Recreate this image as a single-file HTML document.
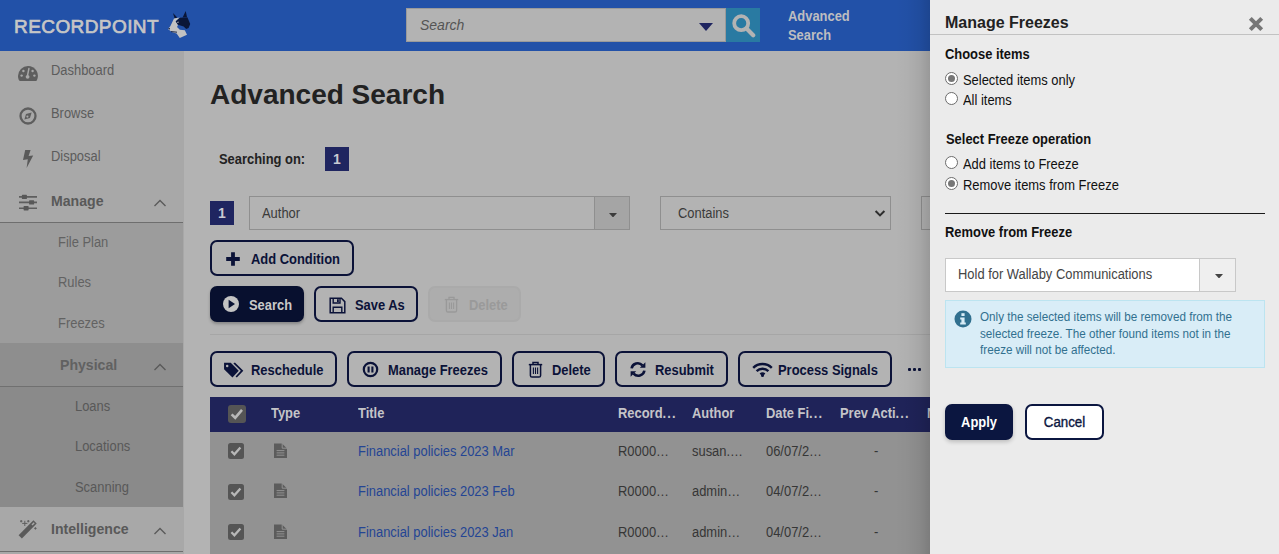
<!DOCTYPE html>
<html lang="en">
<head>
<meta charset="utf-8">
<title>Advanced Search - Manage Freezes</title>
<style>
*{box-sizing:border-box;margin:0;padding:0}
html,body{width:1279px;height:554px;overflow:hidden;background:#b3b3b3;font-family:"Liberation Sans",sans-serif;font-size:14px;color:#222}
.abs{position:absolute}
#stage{position:relative;width:1279px;height:554px;overflow:hidden;background:#b3b3b3}
/* header */
#hdr{position:absolute;left:0;top:0;width:1279px;height:51px;background:#2251a8}
#logo{position:absolute;left:14px;top:14.5px;font-size:19px;line-height:24px;font-weight:normal;letter-spacing:0.42px;color:#c6c6c6;-webkit-text-stroke:.7px #c6c6c6;white-space:nowrap}
#sbox{position:absolute;left:406px;top:8px;width:320px;height:34px;background:#b3b3b3;border:1px solid #9a9a9a}
#sbox span{position:absolute;left:13px;top:8px;font-style:italic;font-size:14px;line-height:16px;color:#555}
#sbtn{position:absolute;left:726px;top:8px;width:34px;height:34px;background:#297aa2}
#advl{position:absolute;left:788px;top:7px;font-weight:bold;font-size:14px;line-height:19px;color:#bdbdc0}
/* sidebar */
#side{position:absolute;left:0;top:51px;width:184px;height:503px;background:#a8a8a8}
.nav{position:absolute;left:51px;font-size:14px;line-height:18px;color:#5c5c5c;white-space:nowrap}
.navb{font-weight:bold;font-size:15px;color:#595959}
.sub{position:absolute;left:0;width:183px}
/* content */
h1{position:absolute;left:210px;top:77px;font-size:28px;line-height:36px;font-weight:bold;color:#222;white-space:nowrap}
.nbox{position:absolute;width:24px;height:24px;background:#1f2560;color:#c9c9d2;font-weight:bold;font-size:14px;line-height:24px;text-align:center}
.inp{position:absolute;height:34px;border:1px solid #8f8f8f;background:#b3b3b3;font-size:14px;line-height:32px;color:#3a3a3a;white-space:nowrap}
.btn{position:absolute;height:36px;border:2px solid #0b1238;border-radius:7px;color:#0b1238;font-weight:bold;font-size:14px;line-height:32px;white-space:nowrap;background:#b3b3b3}
.btn span{position:absolute;top:1px}
.btn svg{position:absolute}
.btn.pri{background:#08102f;color:#c9c9c9;border-color:#08102f;box-shadow:0 2px 3px rgba(0,0,0,.25)}
.btn.dis{border-color:#aaa;background:#adadad;color:#9a9a9a}
/* table */
#thead{position:absolute;left:210px;top:397px;width:730px;height:35px;background:#1f2359}
.th{position:absolute;top:405px;font-weight:bold;font-size:14px;line-height:16px;color:#c4c4c8;white-space:nowrap}
#tbody{position:absolute;left:210px;top:432px;width:730px;height:122px;background:#929292}
.td{position:absolute;font-size:14px;line-height:16px;color:#363636;white-space:nowrap}
.lnk{color:#244594}
.cb{position:absolute;width:16px;height:16px;border-radius:2.5px;background:#555}
.nav,.td,.th,.btn span,#panel .t,.inp .tx,#advl{transform:scaleX(.923);transform-origin:0 50%}
.navb{transform:scaleX(.94)}
#panel .t.ar{transform:none}
/* panel */
#shadow{position:absolute;left:895px;top:0;width:35px;height:554px;background:linear-gradient(to right,rgba(0,0,0,0),rgba(0,0,0,.02) 35%,rgba(0,0,0,.065) 70%,rgba(0,0,0,.15) 100%)}
#panel{position:absolute;left:930px;top:0;width:349px;height:554px;background:#ebebeb;color:#101010}
#panel .t{position:absolute;white-space:nowrap;font-size:14px;line-height:16px}
#panel .b{font-weight:bold;color:#111}
.radio{position:absolute;left:15px;width:13px;height:13px;border-radius:50%;border:1.2px solid #6c6c6c;background:#fff}
.radio.on::after{content:"";position:absolute;left:1.8px;top:1.8px;width:7px;height:7px;border-radius:50%;background:#767676}
</style>
</head>
<body>
<div id="stage">

<!-- HEADER -->
<div id="hdr">
  <div id="logo">RECORDPOINT</div>
  <div id="sbox"><span>Search</span></div>
  <div id="sbtn"><svg class="abs" style="left:5px;top:5px" width="25" height="25" viewBox="0 0 25 25"><circle cx="10.2" cy="10.2" r="7" fill="none" stroke="#b3b3b3" stroke-width="3.8"/><path d="M15.8 15.8 L22.2 22.2" stroke="#b3b3b3" stroke-width="4.2" stroke-linecap="round"/></svg></div>
  <svg class="abs" style="left:699px;top:23px" width="14" height="8" viewBox="0 0 14 8"><path d="M0 0H14L7 8z" fill="#1f2560"/></svg>
  <svg class="abs" id="dog" style="left:166px;top:9px" width="26" height="30" viewBox="166 9 26 30">
    <path d="M173 13 L177.2 17.4 L174.6 18.6z" fill="#0a1638"/>
    <path d="M185.7 10.9 L187 17 L182.6 17.4z" fill="#0a1638"/>
    <path d="M174 18.5 L179.8 17.6 L175.7 21.2 L178 25 L177 27 L179.8 29.8 L184.8 30.2 L187 34.8 L179.8 37.9 L176.6 33.4 L171.7 32 L168 28.9 L170.3 26.2z" fill="#c2c2c2"/>
    <path d="M175.7 21.4 L179.8 17.8 L184 17.6 L187.4 17.2 L190.2 23.9 L188.6 28 L186.2 29 L183.6 26.6 L178 24.8z" fill="#0a1638"/>
    <path d="M168 28.2 L170 28 L169.6 29.8z" fill="#0a1638"/>
    <path d="M171 31.6 L177 32.2" stroke="#0a1638" stroke-width=".9"/>
    <path d="M176.6 22.2 L178.6 21.6 L178.4 23z" fill="#c2c2c2"/>
  </svg>
  <div id="advl">Advanced<br>Search</div>
</div>

<!-- SIDEBAR -->
<div id="side"></div>
<div class="sub" style="top:222px;height:1px;background:#6e6e6e"></div>
<div class="sub" style="top:223px;height:120px;background:#9c9c9c"></div>
<div class="sub" style="top:343px;height:43px;background:#8e8e8e"></div>
<div class="sub" style="top:386px;height:1px;background:#707070"></div>
<div class="sub" style="top:387px;height:120px;background:#8a8a8a"></div>
<div class="sub" style="top:551px;height:1px;background:#6e6e6e"></div>

<div class="nav" style="top:61px">Dashboard</div>
<div class="nav" style="top:104px">Browse</div>
<div class="nav" style="top:147px">Disposal</div>
<div class="nav navb" style="top:192px">Manage</div>
<div class="nav" style="top:233px;left:58px;color:#626262">File Plan</div>
<div class="nav" style="top:273px;left:58px;color:#626262">Rules</div>
<div class="nav" style="top:314px;left:58px;color:#626262">Freezes</div>
<div class="nav navb" style="top:356px;left:60px;color:#616161">Physical</div>
<div class="nav" style="top:397px;left:75px;color:#585858">Loans</div>
<div class="nav" style="top:437px;left:75px;color:#585858">Locations</div>
<div class="nav" style="top:478px;left:75px;color:#585858">Scanning</div>
<div class="nav navb" style="top:520px">Intelligence</div>

<!-- chevrons -->
<svg class="abs" style="left:153px;top:198px" width="14" height="10" viewBox="0 0 14 10"><path d="M1.5 8 L7 2.5 L12.5 8" fill="none" stroke="#5a5a5a" stroke-width="1.4"/></svg>
<svg class="abs" style="left:153px;top:362px" width="14" height="10" viewBox="0 0 14 10"><path d="M1.5 8 L7 2.5 L12.5 8" fill="none" stroke="#5a5a5a" stroke-width="1.4"/></svg>
<svg class="abs" style="left:153px;top:526px" width="14" height="10" viewBox="0 0 14 10"><path d="M1.5 8 L7 2.5 L12.5 8" fill="none" stroke="#5a5a5a" stroke-width="1.4"/></svg>

<!-- nav icons -->
<svg class="abs" id="ic-dash" style="left:17px;top:65px" width="22" height="17" viewBox="0 0 22 17"><path d="M11 1 A10 10 0 0 0 1 11 c0 1.8 .5 3.4 1.2 4.6 .2 .3 .5 .4 .8 .4 h16 c.3 0 .6 -.1 .8 -.4 A10 10 0 0 0 11 1z" fill="#5e5e5e"/><circle cx="4.6" cy="10.6" r="1.2" fill="#a8a8a8"/><circle cx="6.4" cy="6" r="1.2" fill="#a8a8a8"/><circle cx="15.6" cy="6" r="1.2" fill="#a8a8a8"/><circle cx="17.4" cy="10.6" r="1.2" fill="#a8a8a8"/><path d="M11.9 3.6 L10.6 10.2" stroke="#a8a8a8" stroke-width="1.5" stroke-linecap="round"/><circle cx="10.6" cy="11.8" r="1.9" fill="#a8a8a8"/></svg>
<svg class="abs" id="ic-browse" style="left:18px;top:106px" width="20" height="20" viewBox="0 0 20 20"><circle cx="10" cy="10" r="7.5" fill="none" stroke="#5e5e5e" stroke-width="2.3"/><path d="M13.6 6.4 L12 12 L6.4 13.6 L8 8z" fill="#5e5e5e"/><circle cx="9.4" cy="10.6" r="1.1" fill="#a8a8a8"/></svg>
<svg class="abs" id="ic-bolt" style="left:21px;top:149px" width="14" height="20" viewBox="0 0 14 20"><path d="M4.2 1 L9.6 1 L7.6 7 L12.2 6.4 L5.6 19 L6.8 10.2 L2 11z" fill="#5a5a5a"/></svg>
<svg class="abs" id="ic-sliders" style="left:18px;top:194px" width="20" height="18" viewBox="0 0 20 18"><g stroke="#5e5e5e" stroke-width="1.6" fill="none"><path d="M1 2.9 H19 M1 8.4 H19 M1 14.2 H19"/></g><rect x="3.9" y="0.8" width="5" height="4.3" rx=".6" fill="#585858"/><rect x="11.1" y="6.3" width="5" height="4.3" rx=".6" fill="#585858"/><rect x="5.6" y="12.1" width="5" height="4.3" rx=".6" fill="#585858"/></svg>
<svg class="abs" id="ic-wand" style="left:18px;top:518px" width="21" height="21" viewBox="0 0 21 21"><path d="M0.6 17.2 L15.4 2.2 L18.7 5.5 L3.9 20.5z" fill="#5a5a5a"/><path d="M14 7 L16.2 4.8" stroke="#a8a8a8" stroke-width="1.5"/><g stroke="#5e5e5e" stroke-width="1" fill="none"><path d="M6.8 2.8 v5.2 M4.2 5.4 h5.2"/><path d="M3.2 2 v2.4 M2 3.2 h2.4"/><path d="M10.3 2 v2.4 M9.1 3.2 h2.4"/><path d="M17.4 9.2 v2.4 M16.2 10.4 h2.4"/></g></svg>

<!-- CONTENT -->
<h1>Advanced Search</h1>
<div class="td" style="left:219px;top:151px;font-weight:bold;color:#222">Searching on:</div>
<div class="nbox" style="left:325px;top:147px">1</div>
<div class="nbox" style="left:210px;top:201px">1</div>

<div class="inp" style="left:249px;top:196px;width:381px;padding-left:12px"><div class="tx">Author</div>
  <div class="abs" style="right:0;top:0;width:35px;height:32px;background:#a5a5a5;border-left:1px solid #8f8f8f"></div>
  <svg class="abs" style="right:12.5px;top:15.5px" width="8" height="4.5" viewBox="0 0 8 4.5"><path d="M0 0H8L4 4.5z" fill="#3c3c3c"/></svg>
</div>
<div class="inp" style="left:660px;top:196px;width:231px;padding-left:17px"><div class="tx">Contains</div>
  <svg class="abs" style="right:4px;top:12px" width="12" height="9" viewBox="0 0 12 9"><path d="M1.6 2 L6 6.4 L10.4 2" fill="none" stroke="#2e2e2e" stroke-width="2"/></svg>
</div>
<div class="inp" style="left:921px;top:196px;width:200px"></div>

<div class="btn" style="left:210px;top:240px;width:144px">
  <svg style="left:14px;top:10px" width="14" height="14" viewBox="0 0 14 14"><path d="M5.1 0.2h3.8v4.9h4.9v3.8h-4.9v4.9H5.1v-4.9H0.2V5.1h4.9z" fill="#0b1238"/></svg>
  <span style="left:39px">Add Condition</span></div>

<div class="btn pri" style="left:210px;top:286px;width:94px">
  <svg style="left:10.2px;top:6.5px" width="18" height="18" viewBox="0 0 18 18"><circle cx="9" cy="9" r="8" fill="#c4c4c4"/><path d="M6.6 4.8 L13 9 L6.6 13.2z" fill="#0a1334"/></svg>
  <span style="left:37px">Search</span></div>

<div class="btn" style="left:314px;top:286px;width:104px">
  <svg style="left:12.5px;top:9px" width="17" height="17" viewBox="0 0 17 17"><path d="M1.2 1.2 H12.4 L15.8 4.6 V15.8 H1.2z" fill="none" stroke="#0b1238" stroke-width="1.5"/><path d="M4.2 1.2 V6 H11 V1.2" fill="none" stroke="#0b1238" stroke-width="1.4"/><rect x="8" y="2.2" width="1.8" height="2.8" fill="#0b1238"/><path d="M4.2 15.8 V10.2 H12.8 V15.8" fill="none" stroke="#0b1238" stroke-width="1.4"/></svg>
  <span style="left:39px">Save As</span></div>

<div class="btn dis" style="left:428px;top:286px;width:93px">
  <svg style="left:14px;top:8px" width="15" height="17" viewBox="0 0 15 17"><g fill="none" stroke="#999" stroke-width="1.3"><path d="M0.8 3.6 H14.2"/><path d="M5 3.4 V1.4 H10 V3.4"/><path d="M2.4 3.8 V14.4 Q2.4 16 4 16 H11 Q12.6 16 12.6 14.4 V3.8"/><path d="M5.4 6.4 V13 M7.5 6.4 V13 M9.6 6.4 V13" stroke-width="1.1"/></g></svg>
  <span style="left:39px">Delete</span></div>

<div class="abs" style="left:210px;top:334px;width:730px;height:1px;background:#a6a6a6"></div>

<div class="btn" style="left:210px;top:351px;width:127px">
  <svg style="left:11px;top:7.5px" width="22" height="18" viewBox="0 0 21 17"><path d="M1 1.6 H7.4 L15 9.2 L9 15.6 L1 7.8z" fill="#0b1238"/><circle cx="4" cy="4.6" r="1.2" fill="#b3b3b3"/><path d="M10.6 1.6 H11.6 L19.4 9.2 L13.2 15.6 L12 14.6 L17 9.2 L10 2.2z" fill="#0b1238"/></svg>
  <span style="left:39px">Reschedule</span></div>

<div class="btn" style="left:347px;top:351px;width:155px">
  <svg style="left:13px;top:8px" width="17" height="17" viewBox="0 0 17 17"><circle cx="8.5" cy="8.5" r="6.7" fill="none" stroke="#0b1238" stroke-width="2.2"/><path d="M6.6 5.4 V11.6 M10.4 5.4 V11.6" stroke="#0b1238" stroke-width="2.1"/></svg>
  <span style="left:39px">Manage Freezes</span></div>

<div class="btn" style="left:512px;top:351px;width:93px">
  <svg style="left:14px;top:8px" width="15" height="17" viewBox="0 0 15 17"><g fill="none" stroke="#0b1238" stroke-width="1.5"><path d="M0.8 3.6 H14.2"/><path d="M5 3.4 V1.4 H10 V3.4"/><path d="M2.4 3.8 V14.4 Q2.4 16 4 16 H11 Q12.6 16 12.6 14.4 V3.8"/><path d="M5.4 6.4 V13 M7.5 6.4 V13 M9.6 6.4 V13" stroke-width="1.1"/></g></svg>
  <span style="left:38px">Delete</span></div>

<div class="btn" style="left:615px;top:351px;width:113px">
  <svg style="left:12px;top:8px" width="18" height="17" viewBox="0 0 18 17"><g fill="none" stroke="#0b1238" stroke-width="2.6"><path d="M2.6 7.4 A6.2 6.2 0 0 1 13.4 4.4"/><path d="M15.4 9.6 A6.2 6.2 0 0 1 4.6 12.6"/></g><path d="M16.4 1.2 V6.8 H10.8z" fill="#0b1238"/><path d="M1.6 15.8 V10.2 H7.2z" fill="#0b1238"/></svg>
  <span style="left:38px">Resubmit</span></div>

<div class="btn" style="left:738px;top:351px;width:154px">
  <svg style="left:12px;top:9px" width="21" height="16" viewBox="0 0 21 16"><g fill="none" stroke="#0b1238" stroke-width="2.4" stroke-linecap="butt"><path d="M1.2 5.8 A13.2 13.2 0 0 1 19.8 5.8"/><path d="M4.6 9.2 A8.4 8.4 0 0 1 16.4 9.2"/></g><path d="M7.6 11.6 A4.2 4.2 0 0 1 13.4 11.6 L10.5 14.6z" fill="#0b1238"/><circle cx="10.5" cy="13.6" r="1.5" fill="#0b1238"/></svg>
  <span style="left:38px">Process Signals</span></div>

<div class="abs" style="left:907.5px;top:368px;width:14px;height:4px"><i class="abs" style="left:0;top:0;width:3px;height:3px;background:#0b1238;border-radius:1px"></i><i class="abs" style="left:5px;top:0;width:3px;height:3px;background:#0b1238;border-radius:1px"></i><i class="abs" style="left:10px;top:0;width:3px;height:3px;background:#0b1238;border-radius:1px"></i></div>

<!-- TABLE -->
<div id="thead"></div>
<div id="tbody"></div>
<div class="cb" style="left:228px;top:405px;width:18px;height:18px;border-radius:3px"><svg class="abs" style="left:2px;top:3px" width="14" height="12" viewBox="0 0 14 12"><path d="M1.6 6.4 L5.2 9.8 L12 1.8" fill="none" stroke="#b8b8b8" stroke-width="2.6"/></svg></div>
<div class="th" style="left:271px">Type</div>
<div class="th" style="left:358px">Title</div>
<div class="th" style="left:618px">Record<span style="letter-spacing:1.2px">...</span></div>
<div class="th" style="left:692px">Author</div>
<div class="th" style="left:766px">Date Fi<span style="letter-spacing:1.2px">...</span></div>
<div class="th" style="left:840px">Prev Acti<span style="letter-spacing:1.2px">...</span></div>
<div class="th" style="left:927px">Next Acti<span style="letter-spacing:1.2px">...</span></div>
<div class="cb" style="left:228px;top:442.5px"><svg class="abs" style="left:2px;top:3px" width="12" height="10" viewBox="0 0 12 10"><path d="M1.4 5.2 L4.4 8.2 L10.4 1.4" fill="none" stroke="#b8b8b8" stroke-width="2.3"/></svg></div>
<svg class="abs" style="left:274px;top:443px" width="13" height="15" viewBox="0 0 13 15"><path d="M0 0.6 H8 L13 5.4 V15 H0z" fill="#5c5c5c"/><path d="M8.2 0 V5.2 H13.4" fill="none" stroke="#929292" stroke-width="1"/><path d="M2.6 7.6 H10.4 M2.6 9.9 H10.4 M2.6 12.2 H10.4" stroke="#929292" stroke-width="1"/></svg>
<div class="td lnk" style="left:358px;top:443px">Financial policies 2023 Mar</div>
<div class="td" style="left:618px;top:443px">R0000…</div>
<div class="td" style="left:692px;top:443px">susan.…</div>
<div class="td" style="left:766px;top:443px">06/07/2…</div>
<div class="td" style="left:874px;top:443px">-</div>
<div class="cb" style="left:228px;top:483.5px"><svg class="abs" style="left:2px;top:3px" width="12" height="10" viewBox="0 0 12 10"><path d="M1.4 5.2 L4.4 8.2 L10.4 1.4" fill="none" stroke="#b8b8b8" stroke-width="2.3"/></svg></div>
<svg class="abs" style="left:274px;top:483px" width="13" height="15" viewBox="0 0 13 15"><path d="M0 0.6 H8 L13 5.4 V15 H0z" fill="#5c5c5c"/><path d="M8.2 0 V5.2 H13.4" fill="none" stroke="#929292" stroke-width="1"/><path d="M2.6 7.6 H10.4 M2.6 9.9 H10.4 M2.6 12.2 H10.4" stroke="#929292" stroke-width="1"/></svg>
<div class="td lnk" style="left:358px;top:483px">Financial policies 2023 Feb</div>
<div class="td" style="left:618px;top:483px">R0000…</div>
<div class="td" style="left:692px;top:483px">admin…</div>
<div class="td" style="left:766px;top:483px">04/07/2…</div>
<div class="td" style="left:874px;top:483px">-</div>
<div class="cb" style="left:228px;top:524px"><svg class="abs" style="left:2px;top:3px" width="12" height="10" viewBox="0 0 12 10"><path d="M1.4 5.2 L4.4 8.2 L10.4 1.4" fill="none" stroke="#b8b8b8" stroke-width="2.3"/></svg></div>
<svg class="abs" style="left:274px;top:524px" width="13" height="15" viewBox="0 0 13 15"><path d="M0 0.6 H8 L13 5.4 V15 H0z" fill="#5c5c5c"/><path d="M8.2 0 V5.2 H13.4" fill="none" stroke="#929292" stroke-width="1"/><path d="M2.6 7.6 H10.4 M2.6 9.9 H10.4 M2.6 12.2 H10.4" stroke="#929292" stroke-width="1"/></svg>
<div class="td lnk" style="left:358px;top:524px">Financial policies 2023 Jan</div>
<div class="td" style="left:618px;top:524px">R0000…</div>
<div class="td" style="left:692px;top:524px">admin…</div>
<div class="td" style="left:766px;top:524px">04/07/2…</div>
<div class="td" style="left:874px;top:524px">-</div>

<!-- PANEL -->
<div id="shadow"></div>
<div id="panel">
  <div class="t ar" style="left:15px;top:13px;font-size:16px;line-height:20px;font-weight:bold;color:#222">Manage Freezes</div>
  <svg class="abs" style="left:318.3px;top:16.4px" width="16" height="16" viewBox="0 0 16 16"><path d="M2.3 2.3 L13.7 13.7 M13.7 2.3 L2.3 13.7" stroke="#767676" stroke-width="4" stroke-linejoin="round"/></svg>
  <div class="abs" style="left:0;top:34px;width:349px;height:1px;background:#c2c2c2"></div>
  <div class="t b" style="left:15px;top:46px">Choose items</div>
  <div class="radio on" style="top:72px"></div><div class="t" style="left:33px;top:72px">Selected items only</div>
  <div class="radio" style="top:92px"></div><div class="t" style="left:33px;top:92px">All items</div>
  <div class="t b" style="left:16px;top:131px">Select Freeze operation</div>
  <div class="radio" style="top:156px"></div><div class="t" style="left:33px;top:156px">Add items to Freeze</div>
  <div class="radio on" style="top:177px"></div><div class="t" style="left:33px;top:177px">Remove items from Freeze</div>
  <div class="abs" style="left:15px;top:213px;width:320px;height:1px;background:#1a1a1a"></div>
  <div class="t b" style="left:15px;top:224px">Remove from Freeze</div>

  <div class="abs" style="left:15px;top:258px;width:291px;height:34px;border:1px solid #c8c8c8;background:#fff">
    <div class="t" style="left:12px;top:7px;color:#444">Hold for Wallaby Communications</div>
    <div class="abs" style="right:0;top:0;width:36px;height:32px;background:#efefef;border-left:1px solid #c8c8c8"></div>
    <svg class="abs" style="right:12.5px;top:14.5px" width="8" height="4.5" viewBox="0 0 8 4.5"><path d="M0 0H8L4 4.5z" fill="#444"/></svg>
  </div>

  <div class="abs" style="left:15px;top:300px;width:320px;height:68px;border:1px solid #bce4f0;background:#d9edf7">
    <svg class="abs" style="left:8px;top:9px" width="18" height="18" viewBox="0 0 18 18"><circle cx="9" cy="9" r="8.5" fill="#31708f"/><rect x="7.4" y="3.2" width="3.2" height="2.8" fill="#d9edf7"/><path d="M6.2 7.4 H10.6 V12.4 H11.8 V14.4 H6.2 V12.4 H7.4 V9.4 H6.2z" fill="#d9edf7"/></svg>
    <div class="abs info" style="transform:scaleX(.974);transform-origin:0 50%;left:34px;top:8px;font-size:12px;line-height:16.5px;color:#31708f;white-space:nowrap">Only the selected items will be removed from the<br>selected freeze. The other found items not in the<br>freeze will not be affected.</div>
  </div>

  <div class="btn pri" style="left:15px;top:404px;width:68px;background:#0b1640;border-color:#0b1640;color:#fff;text-align:center;box-shadow:0 2px 4px rgba(0,0,0,.2)"><div class="tx" style="transform:scaleX(.923)">Apply</div></div>
  <div class="btn" style="left:95px;top:404px;width:79px;background:#fff;text-align:center;border-color:#0b1640;color:#0b1640;font-weight:normal"><div class="tx" style="transform:scaleX(.95);-webkit-text-stroke:.35px #0b1640">Cancel</div></div>
</div>

</div>
</body>
</html>
